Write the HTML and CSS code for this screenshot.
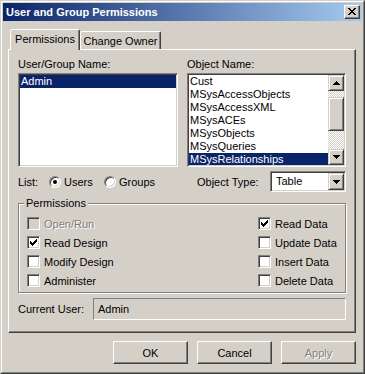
FILE: index.html
```html
<!DOCTYPE html>
<html lang="en">
<head>
  <meta charset="UTF-8">
  <title>User and Group Permissions</title>
  <link rel="stylesheet" href="styles.css">
</head>
<body>

<div class="window">
  <div class="frame">
    <!-- Title bar -->
    <div class="titlebar">
      <span class="title">User and Group Permissions</span>
      <span class="close">
        <svg width="14" height="12" viewBox="0 0 14 12" shape-rendering="crispEdges">
          <path fill="#000" d="M3 2h2v1h-2z M9 2h2v1h-2z M4 3h2v1h-2z M8 3h2v1h-2z M5 4h4v1h-4z M6 5h2v1h-2z M5 6h4v1h-4z M4 7h2v1h-2z M8 7h2v1h-2z M3 8h2v1h-2z M9 8h2v1h-2z"/>
        </svg>
      </span>
    </div>

    <div class="content">
      <div class="tabs">
        <div class="tab active">Permissions</div>
        <div class="tab owner">Change Owner</div>
      </div>

      <div class="panel">
        <div class="grid">
          <div class="label">User/Group Name:</div>
          <div class="label">Object Name:</div>

          <div class="listbox">
            <div class="item sel">Admin</div>
          </div>

          <div class="listbox objects">
            <div class="items">
              <div class="item">Cust</div>
              <div class="item">MSysAccessObjects</div>
              <div class="item">MSysAccessXML</div>
              <div class="item">MSysACEs</div>
              <div class="item">MSysObjects</div>
              <div class="item">MSysQueries</div>
              <div class="item sel">MSysRelationships</div>
            </div>
            <div class="scrollbar">
              <div class="btn3d sb-btn">
                <svg width="7" height="4" viewBox="0 0 7 4" shape-rendering="crispEdges"><path d="M3 0h1v1h-1z M2 1h3v1h-3z M1 2h5v1h-5z M0 3h7v1h-7z"/></svg>
              </div>
              <div class="track"><div class="btn3d thumb"></div></div>
              <div class="btn3d sb-btn">
                <svg width="7" height="4" viewBox="0 0 7 4" shape-rendering="crispEdges"><path d="M0 0h7v1h-7z M1 1h5v1h-5z M2 2h3v1h-3z M3 3h1v1h-1z"/></svg>
              </div>
            </div>
          </div>

          <div class="radio-row">
            <span class="list-label">List:</span>
            <span class="opt users"><span class="radio on"></span>Users</span>
            <span class="opt"><span class="radio"></span>Groups</span>
          </div>

          <div class="type-row">
            <span class="type-label">Object Type:</span>
            <div class="select">
              <span class="select-text">Table</span>
              <span class="btn3d drop">
                <svg width="7" height="4" viewBox="0 0 7 4" shape-rendering="crispEdges"><path d="M0 0h7v1h-7z M1 1h5v1h-5z M2 2h3v1h-3z M3 3h1v1h-1z"/></svg>
              </span>
            </div>
          </div>
        </div>

        <fieldset class="group">
          <legend>Permissions</legend>
          <div class="checks">
            <label class="check disabled"><span class="box"></span>Open/Run</label>
            <label class="check"><span class="box on"><svg width="11" height="11" viewBox="0 0 11 11" shape-rendering="crispEdges"><path d="M8 2h1v1h-1z M7 3h2v1h-2z M2 4h1v1h-1z M6 4h3v1h-3z M2 5h2v1h-2z M5 5h3v1h-3z M2 6h5v1h-5z M3 7h3v1h-3z M4 8h1v1h-1z"/></svg></span>Read Data</label>
            <label class="check"><span class="box on"><svg width="11" height="11" viewBox="0 0 11 11" shape-rendering="crispEdges"><path d="M8 2h1v1h-1z M7 3h2v1h-2z M2 4h1v1h-1z M6 4h3v1h-3z M2 5h2v1h-2z M5 5h3v1h-3z M2 6h5v1h-5z M3 7h3v1h-3z M4 8h1v1h-1z"/></svg></span>Read Design</label>
            <label class="check"><span class="box"></span>Update Data</label>
            <label class="check"><span class="box"></span>Modify Design</label>
            <label class="check"><span class="box"></span>Insert Data</label>
            <label class="check"><span class="box"></span>Administer</label>
            <label class="check"><span class="box"></span>Delete Data</label>
          </div>
        </fieldset>

        <div class="current-row">
          <span class="current-label">Current User:</span>
          <div class="current-field">Admin</div>
        </div>
      </div>

      <div class="buttons">
        <button class="button">OK</button>
        <button class="button">Cancel</button>
        <button class="button disabled">Apply</button>
      </div>
    </div>
  </div>
</div>

</body>
</html>
```

FILE: styles.css
```css
/* Classic dialog look */
body {
  margin: 0;
  font-family: "Liberation Sans", Arial, sans-serif;
  font-size: 11px;
  color: #000;
  background: #d4d0c8;
}
.window {
  width: 365px;
  height: 374px;
  box-sizing: border-box;
  border: 1px solid;
  border-color: #d4d0c8 #404040 #404040 #d4d0c8;
  background: #d4d0c8;
}
.frame {
  height: 100%;
  box-sizing: border-box;
  border: 1px solid;
  border-color: #fff #808080 #808080 #fff;
  padding: 1px;
}
.titlebar {
  height: 18px;
  display: flex;
  align-items: center;
  justify-content: space-between;
  padding: 0 2px 0 3px;
  background: linear-gradient(to right, #0a246a, #a6caf0);
  color: #fff;
  font-weight: bold;
}
.close {
  width: 16px;
  height: 14px;
  box-sizing: border-box;
  border: 1px solid;
  border-color: #fff #404040 #404040 #fff;
  box-shadow: inset -1px -1px 0 #808080;
  background: #d4d0c8;
}
.close svg {
  display: block;
}
.content {
  padding: 0 6px 0 5px;
}

/* Tabs */
.tabs {
  display: flex;
  align-items: flex-end;
  height: 20px;
  margin: 8px 0 0 2px;
}
.tab {
  height: 18px;
  box-sizing: border-box;
  width: 81px;
  border: 1px solid;
  border-bottom: 0;
  border-color: #fff #404040 transparent #fff;
  box-shadow: inset -1px 0 0 #808080;
  border-radius: 2px 2px 0 0;
  display: flex;
  align-items: center;
  justify-content: center;
  background: #d4d0c8;
}
.tab.active {
  width: 70px;
  height: 21px;
  padding-bottom: 2px;
  margin-bottom: -1px;
  position: relative;
  z-index: 1;
}

/* Tab page */
.panel {
  height: 284px;
  box-sizing: border-box;
  border: 1px solid;
  border-color: #fff #404040 #404040 #fff;
  box-shadow: inset -1px -1px 0 #808080;
  padding: 8px 9px 0;
}
.grid {
  display: grid;
  grid-template-columns: 160px 159px;
  column-gap: 9px;
}
.label {
  height: 13px;
  line-height: 13px;
  margin-bottom: 2px;
}
.listbox {
  height: 94px;
  box-sizing: border-box;
  border: 1px solid;
  border-color: #808080 #fff #fff #808080;
  box-shadow: inset 1px 1px 0 #404040, inset -1px -1px 0 #d4d0c8;
  padding: 1px;
  background: #fff;
}
.item {
  height: 13px;
  line-height: 13px;
  padding-left: 1px;
  white-space: nowrap;
}
.item.sel {
  background: #0a246a;
  color: #fff;
}
.listbox.objects {
  display: flex;
}
.items {
  flex: 1;
  overflow: hidden;
}
.scrollbar {
  width: 16px;
  display: flex;
  flex-direction: column;
}
.btn3d {
  box-sizing: border-box;
  border: 1px solid;
  border-color: #d4d0c8 #404040 #404040 #d4d0c8;
  box-shadow: inset 1px 1px 0 #fff, inset -1px -1px 0 #808080;
  background: #d4d0c8;
}
.sb-btn {
  height: 16px;
  display: flex;
  align-items: center;
  justify-content: center;
}
.sb-btn svg,
.drop svg {
  display: block;
}
.track {
  flex: 1;
  padding-top: 6px;
  background-image: conic-gradient(#fff 25%, #d4d0c8 0 50%, #fff 0 75%, #d4d0c8 0);
  background-size: 2px 2px;
}
.thumb {
  height: 34px;
}

/* List / type row */
.radio-row,
.type-row {
  margin-top: 4px;
  height: 21px;
  display: flex;
  align-items: center;
}
.list-label {
  width: 31px;
}
.opt {
  display: flex;
  align-items: center;
  gap: 3px;
}
.opt.users {
  width: 55px;
}
.radio {
  width: 12px;
  height: 12px;
  box-sizing: border-box;
  border-radius: 50%;
  border: 1px solid;
  border-color: #808080 #fff #fff #808080;
  box-shadow: inset 1px 1px 0 #404040, inset -1px -1px 0 #d4d0c8;
  background: #fff;
  display: flex;
  align-items: center;
  justify-content: center;
}
.radio.on::after {
  content: "";
  width: 4px;
  height: 4px;
  border-radius: 50%;
  background: #000;
}
.type-label {
  width: 73px;
  padding-left: 10px;
}
.select {
  width: 76px;
  height: 21px;
  box-sizing: border-box;
  border: 1px solid;
  border-color: #808080 #fff #fff #808080;
  box-shadow: inset 1px 1px 0 #404040, inset -1px -1px 0 #d4d0c8;
  padding: 1px;
  background: #fff;
  display: flex;
}
.select-text {
  flex: 1;
  padding-left: 4px;
  line-height: 17px;
}
.drop {
  width: 16px;
  height: 17px;
  display: flex;
  align-items: center;
  justify-content: center;
}

/* Permissions group */
.group {
  width: 328px;
  box-sizing: border-box;
  margin: 5px 0 0;
  padding: 4px 0 2px 8px;
  border: 1px solid #808080;
  box-shadow: inset 1px 1px 0 #fff, 1px 1px 0 #fff;
}
.group legend {
  padding: 0 2px;
  margin-left: -3px;
  line-height: 13px;
  background: #d4d0c8;
}
.checks {
  display: grid;
  grid-template-columns: 231px auto;
  grid-auto-rows: 19px;
}
.check {
  display: flex;
  align-items: center;
  gap: 4px;
}
.box {
  width: 13px;
  height: 13px;
  box-sizing: border-box;
  border: 1px solid;
  border-color: #808080 #fff #fff #808080;
  box-shadow: inset 1px 1px 0 #404040, inset -1px -1px 0 #d4d0c8;
  background: #fff;
}
.box svg {
  display: block;
}
.check.disabled {
  color: #808080;
  text-shadow: 1px 1px 0 #fff;
}
.check.disabled .box {
  background: #d4d0c8;
}

/* Current user */
.current-row {
  margin-top: 5px;
  display: flex;
  align-items: center;
}
.current-label {
  width: 75px;
}
.current-field {
  width: 253px;
  height: 22px;
  box-sizing: border-box;
  border: 1px solid;
  border-color: #808080 #fff #fff #808080;
  padding-left: 4px;
  line-height: 20px;
}

/* Buttons */
.buttons {
  display: flex;
  justify-content: flex-end;
  gap: 9px;
  margin-top: 8px;
}
.button {
  width: 75px;
  height: 23px;
  box-sizing: border-box;
  border: 1px solid;
  border-color: #fff #404040 #404040 #fff;
  box-shadow: inset -1px -1px 0 #808080;
  background: #d4d0c8;
  font-family: inherit;
  font-size: 11px;
  color: #000;
  padding: 0;
}
.button.disabled {
  color: #808080;
  text-shadow: 1px 1px 0 #fff;
}
```
